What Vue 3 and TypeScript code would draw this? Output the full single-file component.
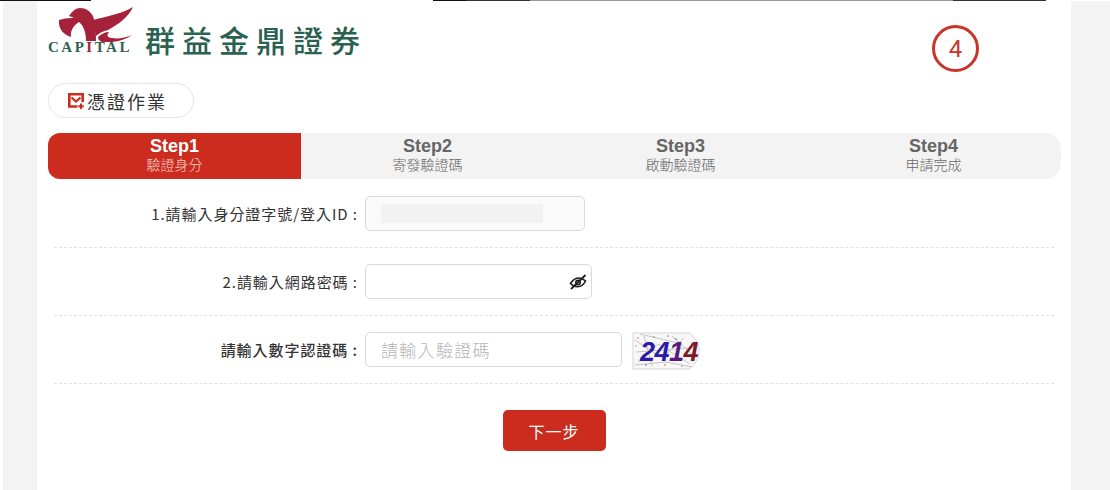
<template>
  <div class="page">
    <div class="top-rule">
      <span v-for="seg in topSegments" :key="seg.color + seg.width" :style="{ width: seg.width + 'px', background: seg.color }"></span>
    </div>
    <div class="shell">
      <div class="gutter gutter--left"></div>
      <main class="content">
        <header class="brand">
          <div class="logo">
            <svg class="logo__bird" viewBox="0 0 86 37" width="86" height="37">
              <path d="M11 15C18 13 27 12 34 15C27 19 22 24 23 32C16 30 10 24 11 15Z" />
              <path d="M21 11C24 7 27 3 32 3C38 3 42 6 45 11C47 17 48 26 48 36H38C38 28 36 21 31 17C28 14 25 12 21 11Z" />
              <path d="M85 2C76 8 60 11 45 15L48 31C53 27 56 26 60 25C69 20 80 13 85 2Z" />
              <path d="M50 32C53 29 57 27 61 27C58 31 60 33 64 33C70 34 77 33 84 30C76 36 64 38 54 37C52 36 50 35 50 32Z" />
            </svg>
            <div class="logo__latin">CAP<b>I</b>TAL</div>
          </div>
          <div class="logo__name">群益金鼎證券</div>
        </header>

        <div class="pill">
          <svg viewBox="0 0 16 16" width="16" height="16" fill="none">
            <path d="M9.5 13.5H1.3V1.3H14.7V9" stroke="#cb2c1d" stroke-width="2.6" />
            <path d="M3.5 4.5L8 8.5L12.5 4.5" stroke="#cb2c1d" stroke-width="2.2" />
            <path d="M13 10.5V16M10.3 13.2H15.8" stroke="#cb2c1d" stroke-width="2" />
          </svg>
          <span>憑證作業</span>
        </div>

        <ol class="steps">
          <li v-for="(step, i) in steps" :key="step.title" class="step" :class="{ 'step--active': i === 0 }">
            <strong>{{ step.title }}</strong>
            <span>{{ step.sub }}</span>
          </li>
        </ol>

        <form class="form" @submit.prevent>
          <div class="row">
            <label class="row__label">1.請輸入身分證字號/登入ID :</label>
            <div class="field field--id">
              <div class="field__mask"></div>
            </div>
          </div>
          <div class="row">
            <label class="row__label">2.請輸入網路密碼 :</label>
            <div class="field field--pwd">
              <svg class="eye" viewBox="0 0 18 16" width="18" height="16" fill="none" stroke="#1c1c1c" stroke-width="1.6">
                <path d="M1.5 9.5C4 5.5 7 4 10 4C12.5 4 14.5 5 16.5 7C14.5 11 11.5 12.8 8.5 12.8C6 12.8 3.5 11.6 1.5 9.5Z" />
                <circle cx="9" cy="8.5" r="2.2" />
                <path d="M16.5 1L2 15" stroke-width="1.8" />
              </svg>
            </div>
          </div>
          <div class="row">
            <label class="row__label row__label--strong">請輸入數字認證碼 :</label>
            <div class="field field--code">請輸入驗證碼</div>
            <svg class="captcha" viewBox="0 0 68 38" width="68" height="38">
              <path d="M1 1H57C63 5 67 12 67 19C67 26 63 33 57 37H1Z" fill="#f8f8f8" stroke="#d4d4d4" />
              <path d="M3 8L30 26L52 6M6 30L26 12L58 32M12 4L20 34M40 4L62 24M4 20L56 16M3 33L34 30L60 35M8 2L50 12" stroke="#c4c4c4" stroke-width="1" fill="none" />
              <circle v-for="dot in dots" :key="dot.x" :cx="dot.x" :cy="dot.y" r="0.8" :fill="dot.c" />
              <text x="8" y="29" class="captcha__text"><tspan fill="#2a1ca8">24</tspan><tspan fill="#5a1a80">1</tspan><tspan fill="#7c1a2c">4</tspan></text>
            </svg>
          </div>
          <div class="actions">
            <button class="next" type="submit">下一步</button>
          </div>
        </form>

        <div class="badge">4</div>
      </main>
      <div class="gutter gutter--right"></div>
    </div>
  </div>
</template>

<script setup lang="ts">
const topSegments = [
  { width: 91, color: '#111' },
  { width: 342, color: 'transparent' },
  { width: 33, color: '#111' },
  { width: 64, color: '#333' },
  { width: 423, color: '#999' },
  { width: 93, color: '#333' },
]

const steps = [
  { title: 'Step1', sub: '驗證身分' },
  { title: 'Step2', sub: '寄發驗證碼' },
  { title: 'Step3', sub: '啟動驗證碼' },
  { title: 'Step4', sub: '申請完成' },
]

const dots = [
  { x: 6, y: 6, c: '#c06060' },
  { x: 14, y: 33, c: '#6060c0' },
  { x: 22, y: 5, c: '#60a060' },
  { x: 33, y: 33, c: '#c06060' },
  { x: 44, y: 7, c: '#6060c0' },
  { x: 50, y: 34, c: '#60b0b0' },
  { x: 60, y: 12, c: '#c06060' },
  { x: 4, y: 14, c: '#c0a060' },
  { x: 36, y: 4, c: '#a060c0' },
]
</script>

<style>
html,
body {
  margin: 0;
  background: #fff;
  overflow: hidden;
}
</style>

<style scoped>
.page {
  width: 1110px;
  height: 490px;
  overflow: hidden;
  font-family: "Liberation Sans", "Noto Sans CJK TC", sans-serif;
}

.top-rule {
  display: flex;
  height: 1px;
}

.shell {
  display: flex;
  height: 489px;
  padding-left: 3px;
}

.gutter {
  background: #f3f3f3;
  flex: none;
}

.gutter--left {
  width: 34px;
}

.gutter--right {
  width: 39px;
}

.content {
  position: relative;
  width: 1034px;
  flex: none;
  padding: 4px 10px 0 11px;
  box-sizing: border-box;
}

.brand {
  display: flex;
  align-items: flex-end;
  height: 48px;
}

.logo {
  width: 86px;
  flex: none;
}

.logo__bird {
  display: block;
  fill: #a6213a;
}

.logo__latin {
  font: bold 15px/11px "Liberation Serif", serif;
  letter-spacing: 2.5px;
  color: #2f6450;
  white-space: nowrap;
}

.logo__latin b {
  color: #a6213a;
}

.logo__name {
  margin: 0 0 -3px 11px;
  font: 500 30px/34px "Noto Sans CJK TC", sans-serif;
  letter-spacing: 7px;
  color: #2b6150;
  white-space: nowrap;
}

.pill {
  display: flex;
  align-items: center;
  gap: 3px;
  width: 146px;
  height: 35px;
  margin-top: 30px;
  padding-left: 19px;
  box-sizing: border-box;
  border: 1px solid #e6e6e6;
  border-radius: 18px;
  font: 400 18px "Noto Sans CJK TC", sans-serif;
  letter-spacing: 2px;
  color: #333;
}

.steps {
  display: grid;
  grid-template-columns: repeat(4, 253px);
  height: 46px;
  margin: 15px 0 0;
  padding: 0;
  list-style: none;
  background: #f3f3f3;
  border-radius: 12px 16px 16px 12px;
  overflow: hidden;
}

.step {
  display: flex;
  flex-direction: column;
  align-items: center;
  padding-top: 4px;
  color: #666;
}

.step strong {
  font: bold 18px/19px "Liberation Sans", sans-serif;
}

.step span {
  font: 300 14px/16px "Noto Sans CJK TC", sans-serif;
}

.step--active {
  background: #cb2c1d;
  color: #fff;
}

.step--active span {
  color: #f3d5d0;
}

.form {
  margin: 1px 0 0;
  padding: 0 7px 0 6px;
}

.row {
  display: flex;
  align-items: center;
  box-sizing: border-box;
  padding: 16px 0;
  border-bottom: 1px dashed #e2e2e2;
}

.row__label {
  width: 311px;
  flex: none;
  box-sizing: border-box;
  padding-right: 7px;
  text-align: right;
  font: 400 15px "Noto Sans CJK TC", sans-serif;
  letter-spacing: 0.95px;
  color: #333;
  white-space: nowrap;
}

.row__label--strong {
  font-weight: 500;
}

.field {
  position: relative;
  display: flex;
  align-items: center;
  height: 35px;
  box-sizing: border-box;
  border: 1px solid #d9d9d9;
  border-radius: 5px;
  background: #fff;
}

.field--id {
  width: 220px;
  background: #fafafa;
}

.field__mask {
  width: 162px;
  height: 19px;
  margin-left: 15px;
  background: #f2f2f2;
}

.field--pwd {
  width: 227px;
}

.eye {
  margin-left: auto;
  margin-right: 4px;
}

.field--code {
  width: 257px;
  padding-left: 15px;
  font: 300 17px "Noto Sans CJK TC", sans-serif;
  letter-spacing: 1.3px;
  color: #b5b5b5;
}

.captcha {
  flex: none;
  margin: 0 0 -3px 10px;
}

.captcha__text {
  font: italic bold 27px "Liberation Sans", sans-serif;
  letter-spacing: -0.5px;
}

.actions {
  display: flex;
  justify-content: center;
  margin-top: 26px;
}

.next {
  width: 103px;
  height: 41px;
  border: 0;
  border-radius: 5px;
  background: #cb2c1d;
  color: #fff;
  font: 400 16px "Noto Sans CJK TC", sans-serif;
  letter-spacing: 1px;
}

.badge {
  position: absolute;
  left: 895px;
  top: 24px;
  width: 47px;
  height: 47px;
  box-sizing: border-box;
  display: flex;
  align-items: center;
  justify-content: center;
  border: 3px solid #c9342b;
  border-radius: 50%;
  font: 400 24px Roboto, sans-serif;
  color: #c9342b;
}
</style>
